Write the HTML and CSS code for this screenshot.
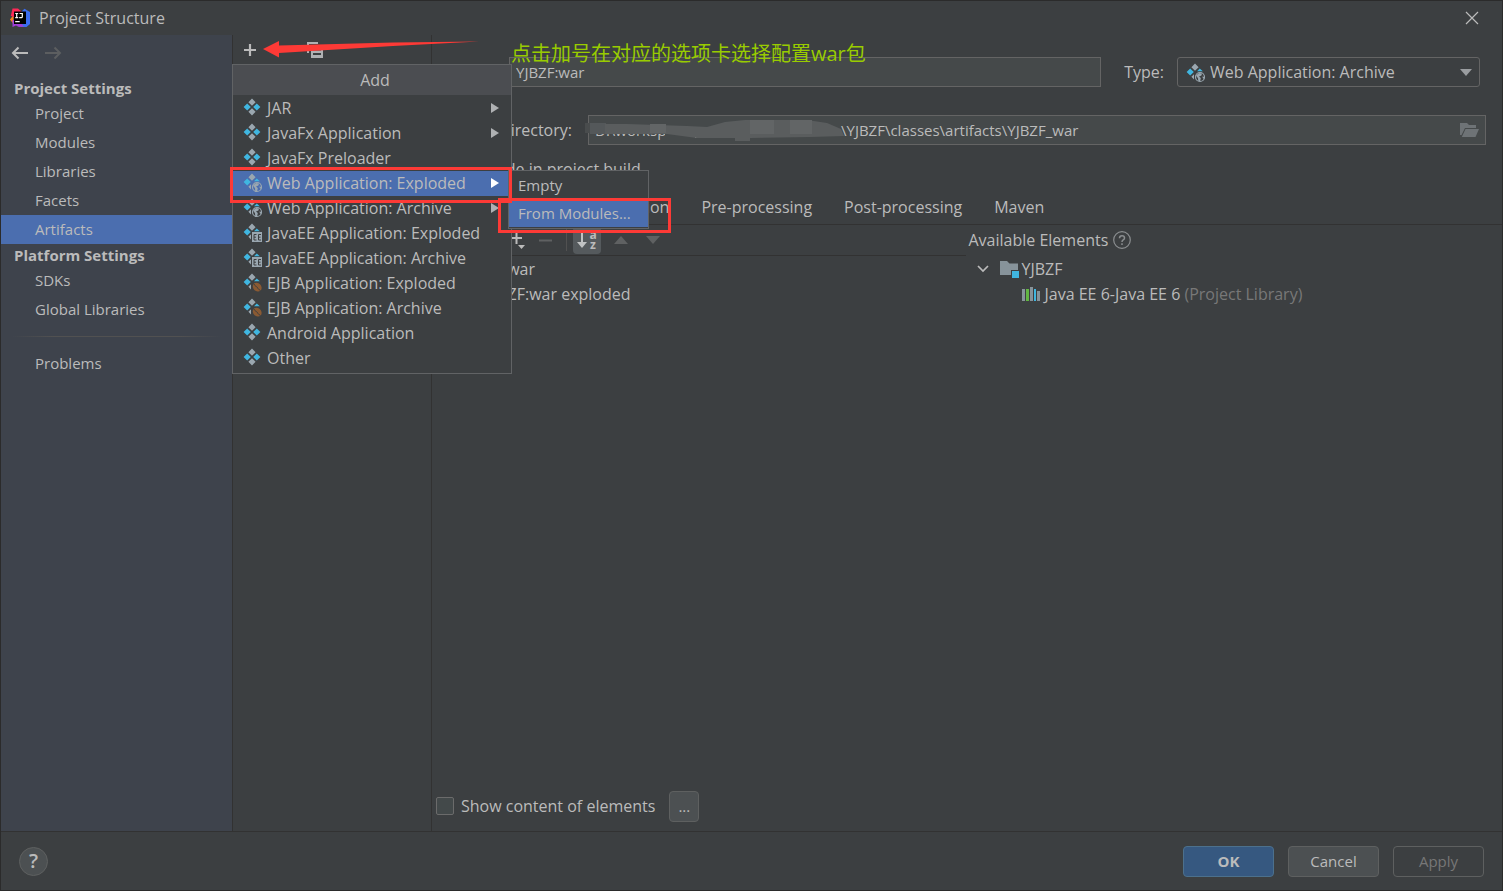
FILE: index.html
```html
<!DOCTYPE html>
<html lang="en">
<head>
<meta charset="utf-8">
<title>Project Structure</title>
<link rel="stylesheet" href="styles.css">
</head>
<body>
<svg class="defs" aria-hidden="true">
  <defs>
    <symbol id="i-artifact" viewBox="0 0 18 18">
      <path fill="#9aa7b0" d="M9 .6 12.6 4.200 9 7.800 5.400 4.200ZM9 10.200 12.600 13.800 9 17.400 5.400 13.800Z"/>
      <path fill="#40b6e0" d="M4.200 5.400 7.800 9 4.200 12.600.6 9ZM13.800 5.400 17.400 9 13.800 12.600 10.200 9Z"/>
    </symbol>
    <symbol id="i-base" viewBox="0 0 20 20">
      <path fill="#9aa7b0" d="M9 .6 12.600 4.200 9 7.800 5.400 4.200ZM8 11.200V16.400L5.400 13.800Z"/>
      <path fill="#40b6e0" d="M4.200 5.400 7.800 9 4.200 12.600.6 9ZM13.800 5.400 16.800 8.200H11Z"/>
    </symbol>
    <symbol id="i-web" viewBox="0 0 20 20">
      <use href="#i-base" width="20" height="20"/>
      <circle cx="14" cy="14" r="4.500" fill="none" stroke="#9aa7b0" stroke-width="1.200"/>
      <path fill="#9aa7b0" d="M10 12.500 13 10l3 .4-.6 2-2.400 1.200 1.800 1.400-.6 3.300-2-.6-.2-2.500ZM16.300 13.500l2 .4-1 2.400Z"/>
    </symbol>
    <symbol id="i-ee" viewBox="0 0 20 20">
      <use href="#i-base" width="20" height="20"/>
      <path fill="#9aa7b0" d="M9 9h10v10H9Z"/>
      <path fill="none" stroke="#3c3f41" stroke-width="1" d="M13.500 11.500h-2.500v5.500h2.500M11 14.200h2M18 11.500h-2.500v5.500h2.500M15.500 14.200h2"/>
    </symbol>
    <symbol id="i-ejb" viewBox="0 0 20 20">
      <use href="#i-base" width="20" height="20"/>
      <ellipse cx="14.200" cy="14.200" rx="4.800" ry="4" fill="#8a5a33" transform="rotate(45 14.200 14.200)"/>
      <path stroke="#3c3f41" stroke-width="1" fill="none" d="M11 11c1 2.500 2.500 2.200 3.200 3.200s1 2.300 3.300 3.300"/>
    </symbol>
  </defs>
</svg>

<main class="window">
  <header class="titlebar">
    <svg class="logo" viewBox="0 0 20 20" aria-hidden="true">
      <path fill="#fc801d" d="M0 11.500 3.500 7v9Z"/>
      <path fill="#fe2857" d="M2.500.5H8L12 4v5H4L.8 8Z"/>
      <path fill="#3b6cf0" d="M11 4 14.500.8 20 4v12l-3.500 3H10l4-6Z"/>
      <path fill="#a13fd8" d="M2.500 12H8l6 6.500-5 .5-3-1.500-3.500 1.500Z"/>
      <path fill="#000" d="M4 3.500h12v12.500H4Z"/>
      <path fill="none" stroke="#fff" stroke-width="1.200" d="M5.200 5.500h3M6.700 5.500v4M5.200 9.600h3M9.500 5.500h2.800v3.300q0 .9-1 .9H9.200M5.200 13.600h4.500"/>
    </svg>
    <h1 class="title">Project Structure</h1>
    <button class="icon-button close" aria-label="Close">
      <svg viewBox="0 0 14 14" width="14" height="14"><path d="M1 1 13 13M13 1 1 13" stroke="#bbb" stroke-width="1.200" fill="none"/></svg>
    </button>
  </header>

  <div class="body">
    <nav class="sidebar">
      <div class="history">
        <button class="icon-button" aria-label="Back"><svg viewBox="0 0 18 14" width="18" height="14"><path d="M17 7H2M7.500 1.500 2 7l5.500 5.500" stroke="#bbb" stroke-width="2" fill="none"/></svg></button>
        <button class="icon-button" aria-label="Forward" disabled><svg viewBox="0 0 18 14" width="18" height="14"><path d="M1 7h15M10.500 1.500 16 7l-5.500 5.500" stroke="#5c5e60" stroke-width="2" fill="none"/></svg></button>
      </div>
      <h2 class="group">Project Settings</h2>
      <a class="nav-item" href="#project">Project</a>
      <a class="nav-item" href="#modules">Modules</a>
      <a class="nav-item" href="#libraries">Libraries</a>
      <a class="nav-item" href="#facets">Facets</a>
      <a class="nav-item selected" href="#artifacts" aria-current="page">Artifacts</a>
      <h2 class="group">Platform Settings</h2>
      <a class="nav-item" href="#sdks">SDKs</a>
      <a class="nav-item" href="#global">Global Libraries</a>
      <hr class="divider">
      <a class="nav-item" href="#problems">Problems</a>
    </nav>

    <section class="artifacts" aria-label="Artifacts">
      <button class="icon-button" aria-label="Add"><svg viewBox="0 0 14 14" width="14" height="14"><path d="M7 1v12M1 7h12" stroke="#bbb" stroke-width="2.200" fill="none"/></svg></button>
      <button class="icon-button" aria-label="Copy"><svg viewBox="0 0 16 16" width="16" height="16"><path d="M1 11V1h10" stroke="#afb1b3" stroke-width="2" fill="none"/><path fill="#afb1b3" fill-rule="evenodd" d="M4 4h12v12H4ZM6 7v1.500h8V7ZM6 11v2h8v-2Z"/></svg></button>
    </section>

    <section class="editor" aria-label="Artifact">
      <div class="name-row">
        <input class="field name" type="text" value="YJBZF:war" aria-label="Name">
        <label class="type-label" for="type">Type:</label>
        <div class="select-wrap">
          <svg class="select-icon" width="20" height="20" aria-hidden="true"><use href="#i-web"/></svg>
          <select id="type" class="type"><option>Web Application: Archive</option></select>
          <svg class="select-arrow" viewBox="0 0 12 7" width="12" height="7" aria-hidden="true"><path d="M0 0h12L6 7Z" fill="#9a9da0"/></svg>
        </div>
      </div>
      <div class="dir-row">
        <label class="dir-label" for="dir">Output directory:</label>
        <div class="dir-wrap">
          <input id="dir" class="field" type="text" value="D:\workspace_                                     \YJBZF\classes\artifacts\YJBZF_war">
          <svg class="smudge" viewBox="0 0 260 24" width="260" height="24" aria-hidden="true">
            <path fill="#494c4d" d="M0 5h6v10H0Z"/>
            <path fill="#54585a" d="M5 5h16v11H5Z"/>
            <path fill="#45494a" d="M80 10h30v11H80Z"/>
            <path fill="#5a5d5e" d="M20 6h22l60 2 20 1 18-5 20-2h62l20 3 14 6 3 7-34 1-60 1v3h-15v-3h-38l-30-4H20Z"/>
            <path fill="#626566" d="M65 6h16v9H65ZM165 2h24v14h-24ZM205 2h22v14h-22Z"/>
          </svg>
          <button class="icon-button browse" aria-label="Browse"><svg viewBox="0 0 20 14" width="20" height="14"><path fill="#6e7376" d="M0 0h7l2 2h7v3H5L1.500 12H0ZM5.500 6H19l-3.500 8H1.800Z"/></svg></button>
        </div>
      </div>
      <div class="include-row">
        <input id="include" class="check" type="checkbox">
        <label for="include">Include in project build</label>
      </div>
      <div class="tabs" role="tablist">
        <button class="tab" role="tab">Validation</button>
        <button class="tab" role="tab">Pre-processing</button>
        <button class="tab" role="tab">Post-processing</button>
        <button class="tab" role="tab">Maven</button>
      </div>
      <div class="panes">
        <div class="layout-pane">
          <div class="toolbar">
            <button class="icon-button" aria-label="Add copy of"><svg viewBox="0 0 18 18" width="18" height="18"><path d="M7.500 1v12M2 7h11" stroke="#bbb" stroke-width="2" fill="none"/><path d="M9 14h7l-3.500 4Z" fill="#bbb"/></svg></button>
            <button class="icon-button remove" aria-label="Remove" disabled><svg viewBox="0 0 13 13" width="13" height="13"><path d="M0 6.500h13" stroke="#5f6162" stroke-width="2"/></svg></button>
            <span class="separator"></span>
            <button class="icon-button sort" aria-label="Sort by name">
              <svg viewBox="0 0 10 18" width="10" height="18"><path d="M5 0v14" stroke="#c0c2c3" stroke-width="2"/><path d="M0 11h10l-5 6Z" fill="#c0c2c3"/></svg>
              <span class="az"><span>a</span><span>z</span></span>
            </button>
            <button class="icon-button" aria-label="Move up" disabled><svg viewBox="0 0 14 8" width="14" height="8"><path d="M0 8 7 0l7 8Z" fill="#5f6162"/></svg></button>
            <button class="icon-button" aria-label="Move down" disabled><svg viewBox="0 0 14 8" width="14" height="8"><path d="M0 0h14L7 8Z" fill="#5f6162"/></svg></button>
          </div>
          <ul class="tree packed">
            <li>YJBZF:war</li>
            <li class="child">YJBZF:war exploded</li>
          </ul>
        </div>
        <div class="available-pane">
          <div class="available-head">
            <span>Available Elements</span>
            <svg viewBox="0 0 18 18" width="18" height="18" aria-hidden="true"><circle cx="9" cy="9" r="8.300" fill="none" stroke="#8b8e90" stroke-width="1.200"/><path d="M6.500 7.200q0-2.500 2.500-2.500t2.500 2.200q0 1.200-1.300 2T9 11M9 12.300v1.700" fill="none" stroke="#8b8e90" stroke-width="1.500"/></svg>
          </div>
          <ul class="tree">
            <li class="module">
              <svg viewBox="0 0 12 8" width="12" height="8" aria-hidden="true"><path d="M1 1l5 5 5-5" stroke="#bbb" stroke-width="1.700" fill="none"/></svg>
              <svg class="module-icon" viewBox="0 0 19 18" width="19" height="18" aria-hidden="true"><path fill="#87939a" d="M0 1h7l2.500 2.500H18V10h-7v5H0Z"/><path fill="#40b6e0" d="M12 11h7v7h-7Z"/></svg>
              <span>YJBZF</span>
            </li>
            <li class="library">
              <svg viewBox="0 0 18 16" width="18" height="16" aria-hidden="true"><path fill="#87939a" d="M0 3h3v12H0ZM8 1h3v14H8ZM15 5h3v10h-3Z"/><path fill="#62b543" d="M4 3h3v12H4Z"/><path fill="#40b6e0" d="M12 3h2v12h-2Z"/></svg>
              <span>Java EE 6-Java EE 6 <span class="muted">(Project Library)</span></span>
            </li>
          </ul>
        </div>
      </div>
      <div class="show-row">
        <input id="show" class="check" type="checkbox">
        <label for="show">Show content of elements</label>
        <button class="button more">...</button>
      </div>
    </section>
  </div>

  <footer class="footer">
    <button class="help" aria-label="Help">?</button>
    <button class="button primary">OK</button>
    <button class="button">Cancel</button>
    <button class="button" disabled>Apply</button>
  </footer>

  <div class="menu add-menu" role="menu">
    <div class="menu-title">Add</div>
    <button class="menu-item" role="menuitem"><svg class="mi"><use href="#i-artifact" width="18" height="18"/></svg>JAR<span class="sub"></span></button>
    <button class="menu-item" role="menuitem"><svg class="mi"><use href="#i-artifact" width="18" height="18"/></svg>JavaFx Application<span class="sub"></span></button>
    <button class="menu-item" role="menuitem"><svg class="mi"><use href="#i-artifact" width="18" height="18"/></svg>JavaFx Preloader</button>
    <button class="menu-item selected" role="menuitem"><svg class="mi"><use href="#i-web" width="20" height="20"/></svg>Web Application: Exploded<span class="sub"></span></button>
    <button class="menu-item" role="menuitem"><svg class="mi"><use href="#i-web" width="20" height="20"/></svg>Web Application: Archive<span class="sub"></span></button>
    <button class="menu-item" role="menuitem"><svg class="mi"><use href="#i-ee" width="20" height="20"/></svg>JavaEE Application: Exploded</button>
    <button class="menu-item" role="menuitem"><svg class="mi"><use href="#i-ee" width="20" height="20"/></svg>JavaEE Application: Archive</button>
    <button class="menu-item" role="menuitem"><svg class="mi"><use href="#i-ejb" width="20" height="20"/></svg>EJB Application: Exploded</button>
    <button class="menu-item" role="menuitem"><svg class="mi"><use href="#i-ejb" width="20" height="20"/></svg>EJB Application: Archive</button>
    <button class="menu-item" role="menuitem"><svg class="mi"><use href="#i-artifact" width="18" height="18"/></svg>Android Application</button>
    <button class="menu-item" role="menuitem"><svg class="mi"><use href="#i-artifact" width="18" height="18"/></svg>Other</button>
  </div>
  <div class="menu sub-menu" role="menu">
    <button class="menu-item" role="menuitem">Empty</button>
    <button class="menu-item selected" role="menuitem">From Modules...</button>
  </div>

  <div class="mark mark-menu"></div>
  <div class="mark mark-submenu"></div>
  <svg class="pointer" viewBox="0 0 217 18" width="217" height="18" aria-hidden="true"><path fill="#fd3a36" d="M0 8 16 0v4.500L130 1.500 216 .5 130 5 16 12v4.500Z"/></svg>
  <p class="note" lang="zh">点击加号在对应的选项卡选择配置war包</p>
</main>
</body>
</html>
```
FILE: styles.css
```css
* { box-sizing: border-box; }

body {
  margin: 0;
  background: #3c3f41;
  color: #bbb;
  font: 16px/20px "Open Sans", "Noto Sans CJK SC", sans-serif;
}

button, input, select { font: inherit; color: inherit; }
h1, h2, p, ul { margin: 0; padding: 0; }
ul { list-style: none; }
.defs { position: absolute; width: 0; height: 0; }

.window {
  position: relative;
  display: flex;
  flex-direction: column;
  min-height: 100vh;
  border: 1px solid #2b2b2b;
}

.titlebar {
  display: flex;
  align-items: center;
  height: 34px;
  padding: 0 23px 0 9px;
}
.logo { width: 20px; height: 20px; }
.title { flex: 1; margin-left: 9px; font-size: 16px; font-weight: 400; }

.icon-button {
  display: flex;
  align-items: center;
  justify-content: center;
  padding: 0;
  border: 0;
  background: none;
}

.body { display: flex; flex: 1; }

.sidebar {
  width: 231px;
  background: #3e434c;
  font-size: 15px;
}
.history {
  display: flex;
  gap: 15px;
  height: 42px;
  padding: 0 0 6px 10px;
}
.group {
  padding-left: 13px;
  font-size: 15px;
  line-height: 22px;
  font-weight: 700;
}
.nav-item {
  display: block;
  padding-left: 34px;
  line-height: 29px;
  color: inherit;
  text-decoration: none;
}
.nav-item.selected { background: #4b6eaf; }
.divider {
  height: 1px;
  margin: 12px 10px;
  border: 0;
  background: linear-gradient(90deg, transparent, #515151 20%, #515151 80%, transparent);
}

.artifacts {
  display: flex;
  align-items: flex-start;
  gap: 50px;
  width: 200px;
  padding: 7px 10px;
  border: solid #323232;
  border-width: 0 1px;
}
.artifacts .icon-button { height: 16px; }

.editor {
  display: flex;
  flex: 1;
  flex-direction: column;
  padding-top: 22px;
}
.field {
  display: block;
  width: 100%;
  height: 30px;
  padding: 0 6px 1px;
  border: 1px solid #646464;
  background: #45494a;
  font-size: 15px;
}
.name-row {
  display: flex;
  align-items: center;
  padding: 0 22px 0 77px;
}
.name { flex: 1; }
.type-label { margin: 0 13px 0 23px; }
.select-wrap { position: relative; width: 303px; }
.type {
  display: block;
  width: 100%;
  height: 30px;
  padding: 0 30px 0 32px;
  border: 1px solid #646464;
  border-radius: 3px;
  appearance: none;
  background: #3c3f41;
}
.select-icon { position: absolute; left: 9px; top: 6px; }
.select-arrow { position: absolute; right: 8px; top: 12px; }

.dir-row {
  display: flex;
  align-items: center;
  padding: 28px 16px 0 8px;
}
.dir-label { width: 132px; margin-right: 16px; text-align: right; white-space: nowrap; }
.dir-wrap { position: relative; flex: 1; }
.smudge { position: absolute; left: -3px; top: 3px; }
.browse { position: absolute; right: 6px; top: 8px; }

.check {
  width: 18px;
  height: 18px;
  margin: 0 7px 0 0;
  border: 1px solid #6b6b6b;
  border-radius: 2px;
  appearance: none;
  background: #43494a;
}
.include-row {
  display: flex;
  align-items: center;
  padding: 14px 0 0 13px;
}

.tabs {
  display: flex;
  align-items: flex-start;
  gap: 32px;
  height: 46px;
  padding: 18px 0 0 163px;
  border-bottom: 1px solid #323232;
}
.tab { padding: 0; border: 0; background: none; }

.panes { display: flex; flex: 1; }
.layout-pane, .available-pane { flex: 1; }
.toolbar {
  display: flex;
  align-items: center;
  gap: 18px;
  height: 31px;
  padding-left: 77px;
  border-bottom: 1px solid #323232;
}
.remove { margin-left: -6px; }
.separator { width: 1px; height: 22px; margin: 0 -12px 0 -4px; background: #515151; }
.sort {
  gap: 2px;
  width: 28px;
  height: 28px;
  margin-right: -5px;
  border-radius: 4px;
  background: #555a5d;
}
.az { display: flex; flex-direction: column; font-size: 12px; line-height: 10px; font-weight: 700; }
.tree li { display: flex; align-items: center; height: 25px; }
.packed { padding-left: 30px; }
.child { padding-left: 22px; }
.available-pane { padding-left: 3px; }
.available-head { display: flex; align-items: center; gap: 5px; height: 31px; padding-bottom: 2px; }
.module { padding-left: 8px; gap: 11px; }
.module-icon { margin-right: -8px; }
.library { padding-left: 53px; gap: 5px; }
.muted { color: #787878; }

.show-row {
  display: flex;
  align-items: center;
  height: 50px;
  padding-left: 4px;
}

.button {
  width: 91px;
  height: 31px;
  padding: 0;
  border: 1px solid #5e6060;
  border-radius: 4px;
  background: #4c5052;
  font-size: 15px;
}
.button.primary { border-color: #4c708c; background: #365880; font-weight: 700; }
.button:disabled { background: none; color: #777; }
.more { width: 30px; margin-left: 14px; }

.footer {
  display: flex;
  align-items: center;
  gap: 14px;
  height: 59px;
  padding: 0 18px;
  border-top: 1px solid #323232;
}
.help {
  width: 29px;
  height: 29px;
  margin-right: auto;
  padding: 0;
  border: 1px solid #5e6060;
  border-radius: 50%;
  background: #4c5052;
  font-size: 20px;
  font-weight: 600;
}

.menu {
  position: absolute;
  border: 1px solid #616365;
  background: #3c3f41;
}
.add-menu { left: 231px; top: 63px; width: 280px; padding-bottom: 2px; }
.sub-menu { left: 507px; top: 169px; width: 141px; padding-bottom: 1px; }
.menu-title {
  margin-bottom: 1px;
  padding-left: 6px;
  background: #4b4d51;
  line-height: 30px;
  text-align: center;
}
.menu-item {
  display: flex;
  align-items: center;
  width: 100%;
  height: 25px;
  padding: 0 12px 1px 10px;
  border: 0;
  background: none;
  white-space: nowrap;
}
.sub-menu .menu-item { height: 28px; padding: 0 9px 1px; font-size: 15px; }
.menu-item.selected { background: #4b6eaf; }
.mi { width: 20px; height: 20px; margin-right: 4px; }
.sub {
  margin-left: auto;
  border: 5px solid transparent;
  border-left: 8px solid #afb1b3;
  border-right: 0;
}
.selected .sub { border-left-color: #fff; }

.mark { position: absolute; border: 3px solid #fd3a36; }
.mark-menu { left: 229px; top: 166px; width: 282px; height: 36px; }
.mark-submenu { left: 497px; top: 197px; width: 173px; height: 35px; }
.pointer { position: absolute; left: 262px; top: 40px; }
.note {
  position: absolute;
  left: 510px;
  top: 39px;
  color: #9c0;
  font-size: 20px;
  line-height: 28px;
}
```
